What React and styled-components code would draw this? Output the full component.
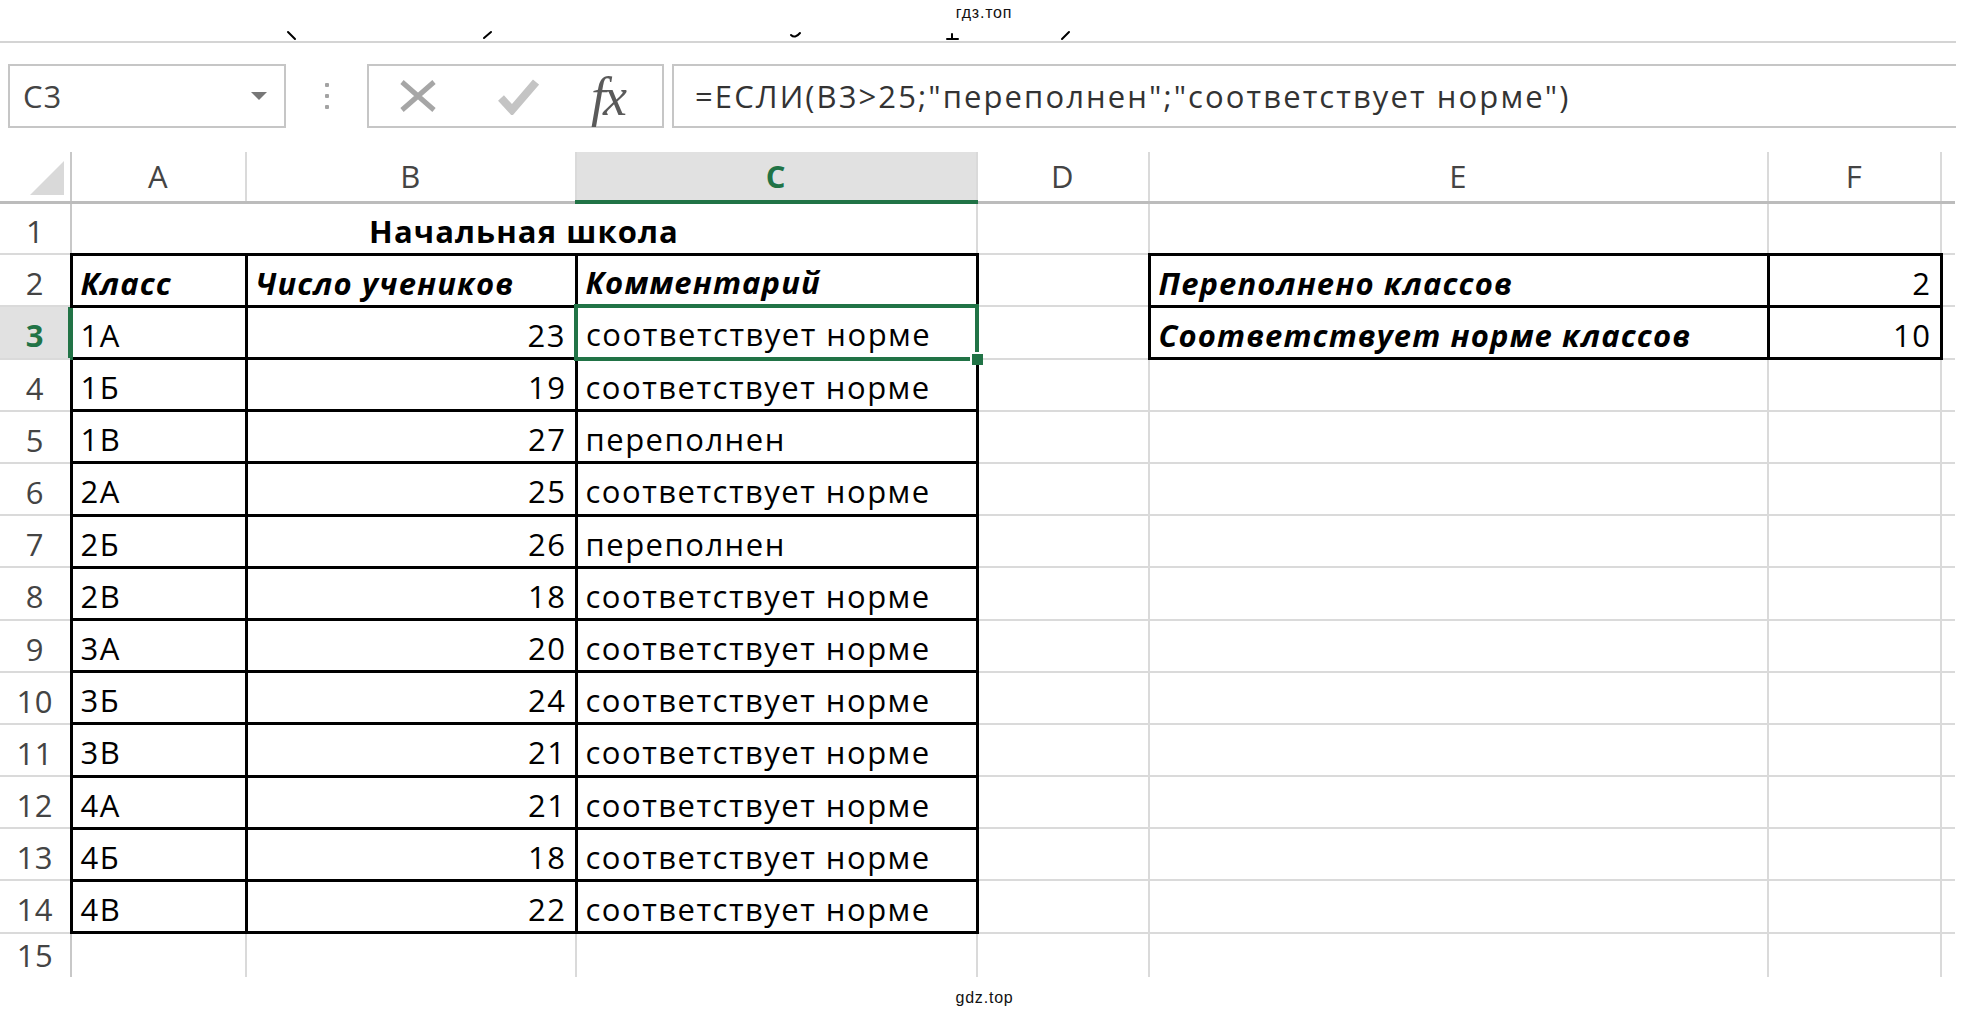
import React from 'react'
import styled, { createGlobalStyle, css } from 'styled-components'

const GREEN = '#217346'
const GRID = '#dadada'

const COLS = [71, 175, 330, 401, 172, 619, 173, 14]

const DATA = [
  ['1А', 23, 'соответствует норме'],
  ['1Б', 19, 'соответствует норме'],
  ['1В', 27, 'переполнен'],
  ['2А', 25, 'соответствует норме'],
  ['2Б', 26, 'переполнен'],
  ['2В', 18, 'соответствует норме'],
  ['3А', 20, 'соответствует норме'],
  ['3Б', 24, 'соответствует норме'],
  ['3В', 21, 'соответствует норме'],
  ['4А', 21, 'соответствует норме'],
  ['4Б', 18, 'соответствует норме'],
  ['4В', 22, 'соответствует норме'],
]

const SUMMARY = {
  2: ['Переполнено классов', 2],
  3: ['Соответствует норме классов', 10],
}

const GlobalStyle = createGlobalStyle`
  html, body {
    margin: 0;
    padding: 0;
    background: #fff;
  }
  body {
    font-family: "Open Sans", "Liberation Sans", sans-serif;
  }
`

const Page = styled.div`
  width: 1969px;
  height: 1012px;
  overflow: hidden;
  background: #fff;
  display: flex;
  flex-direction: column;
`

const TopStrip = styled.div`
  position: relative;
  width: 1956px;
  height: 43px;
  box-sizing: border-box;
  border-bottom: 2px solid #d4d4d4;
  padding: 4px 0 0 12px;
  text-align: center;
`

const Watermark = styled.div`
  font-family: "Liberation Sans", Arial, sans-serif;
  font-size: 16px;
  letter-spacing: 0.8px;
  line-height: 17px;
  color: #111;
  text-align: center;
`

const Marks = styled.svg`
  position: absolute;
  left: 0;
  top: 0;
`

const FormulaBar = styled.div`
  display: flex;
  align-items: flex-start;
  width: 1956px;
  box-sizing: border-box;
  padding: 21px 0 24px 8px;
`

const NameBox = styled.div`
  width: 278px;
  height: 64px;
  box-sizing: border-box;
  border: 2px solid #c6c6c6;
  display: flex;
  align-items: center;
  justify-content: space-between;
  padding: 0 17px 0 13px;
  font-size: 31px;
  letter-spacing: 1px;
  color: #444;
`

const DropArrow = styled.span`
  width: 0;
  height: 0;
  border-left: 8px solid transparent;
  border-right: 8px solid transparent;
  border-top: 8px solid #777;
`

const Dots = styled.div`
  width: 81px;
  height: 64px;
  display: flex;
  flex-direction: column;
  align-items: center;
  justify-content: center;
  gap: 7px;
`

const Dot = styled.span`
  width: 4px;
  height: 4px;
  border-radius: 1px;
  background: #a3a3a3;
`

const ButtonsBox = styled.div`
  width: 297px;
  height: 64px;
  box-sizing: border-box;
  border: 2px solid #c6c6c6;
  display: flex;
  align-items: center;
  padding-left: 30px;
`

const Icon = styled.svg`
  flex: none;
  margin-left: ${p => p.$gap || 0}px;
`

const Fx = styled.span`
  margin-left: 52px;
  margin-top: 2px;
  font-family: "Liberation Serif", "Times New Roman", serif;
  font-style: italic;
  font-size: 54px;
  line-height: 54px;
  letter-spacing: -3px;
  color: #5a5a5a;
`

const FormulaBox = styled.div`
  flex: 1;
  height: 64px;
  box-sizing: border-box;
  border: 2px solid #c6c6c6;
  border-right: none;
  margin-left: 8px;
  display: flex;
  align-items: center;
  padding-left: 21px;
  font-size: 31px;
  letter-spacing: 2.1px;
  color: #333;
`

const Sheet = styled.table`
  border-collapse: collapse;
  table-layout: fixed;
  width: ${COLS.reduce((a, b) => a + b, 0)}px;
  font-size: 31px;
  letter-spacing: 1.5px;
  line-height: 1.36;
`

const Col = styled.col`
  width: ${p => p.$w}px;
`

const Row = styled.tr`
  height: ${p => p.$h}px;
`

const Corner = styled.th`
  padding: 0;
  border-right: 2px solid #c8c8c8;
  border-bottom: 3px solid #bcbcbc;
  vertical-align: bottom;
  text-align: right;
`

const CornerMark = styled.svg`
  display: block;
  margin: 0 6px 6px auto;
`

const ColHead = styled.th`
  padding: 0 0 3px;
  font-weight: 400;
  color: #444;
  text-align: center;
  vertical-align: bottom;
  border-right: ${p => (p.$open ? 'none' : `2px solid ${GRID}`)};
  border-bottom: 3px solid #bcbcbc;
  ${p =>
    p.$active &&
    css`
      background: #e1e1e1;
      color: ${GREEN};
      font-weight: 700;
      border-bottom: 4px solid ${GREEN};
    `}
`

const RowHead = styled.th`
  padding: 0 0 1px;
  font-weight: 400;
  color: #444;
  text-align: center;
  vertical-align: bottom;
  letter-spacing: 0.5px;
  border-right: 2px solid #c8c8c8;
  border-bottom: ${p => (p.$last ? 'none' : `2px solid ${GRID}`)};
  ${p =>
    p.$active &&
    css`
      background: #e1e1e1;
      color: ${GREEN};
      font-weight: 700;
      border-right: 3px solid ${GREEN};
      box-shadow: inset -2px 0 0 ${GREEN};
    `}
`

const Cell = styled.td`
  position: relative;
  padding: 0 8px 1px 8px;
  vertical-align: bottom;
  white-space: nowrap;
  color: #000;
  text-align: ${p => p.$align || 'left'};
  font-weight: ${p => (p.$bold ? 700 : 400)};
  font-style: ${p => (p.$italic ? 'italic' : 'normal')};
  letter-spacing: ${p => (p.$bold ? 1.1 : 1.5)}px;
  border-right: ${p => (p.$open ? 'none' : `2px solid ${GRID}`)};
  border-bottom: ${p => (p.$last ? 'none' : `2px solid ${GRID}`)};
  ${p =>
    p.$boxed &&
    css`
      border: 3px solid #000;
    `}
  ${p =>
    p.$selected &&
    css`
      border: 4px solid ${GREEN};
    `}
`

const FillHandle = styled.span`
  position: absolute;
  z-index: 2;
  right: -8px;
  bottom: -8px;
  width: 13px;
  height: 13px;
  box-sizing: border-box;
  background: ${GREEN};
  border-left: 2px solid #fff;
  border-top: 2px solid #fff;
`

const Footer = styled.div`
  padding-top: 12px;
  font-family: "Liberation Sans", Arial, sans-serif;
  font-size: 16px;
  letter-spacing: 0.8px;
  line-height: 17px;
  color: #111;
  text-align: center;
`

function TopMarks() {
  return (
    <Marks width="1956" height="41" viewBox="0 0 1956 41">
      <g stroke="#000" strokeWidth="2" fill="none" strokeLinecap="round">
        <path d="M288 32 L295 39" />
        <path d="M484 38 L491 32" />
        <path d="M791 35 Q795 39 800 33" />
        <path d="M952 34 L952 38 M947 39 L958 39" />
        <path d="M1062 39 L1069 32" />
      </g>
    </Marks>
  )
}

function FormulaRow() {
  return (
    <FormulaBar>
      <NameBox>
        <span>C3</span>
        <DropArrow />
      </NameBox>
      <Dots>
        <Dot />
        <Dot />
        <Dot />
      </Dots>
      <ButtonsBox>
        <Icon width="38" height="34" viewBox="0 0 38 34">
          <path d="M3 3 L35 31 M35 3 L3 31" stroke="#a6a6a6" strokeWidth="5" />
        </Icon>
        <Icon $gap={60} width="42" height="37" viewBox="0 0 42 37">
          <path d="M4 20 L15 32 L39 4" stroke="#c4c4c4" strokeWidth="8" fill="none" />
        </Icon>
        <Fx>fx</Fx>
      </ButtonsBox>
      <FormulaBox>=ЕСЛИ(B3&gt;25;"переполнен";"соответствует норме")</FormulaBox>
    </FormulaBar>
  )
}

function DataRow({ n, item }) {
  const [cls, count, note] = item
  const summary = SUMMARY[n]
  const selected = n === 3
  return (
    <Row $h={52.2}>
      <RowHead $active={selected}>{n}</RowHead>
      <Cell $boxed>{cls}</Cell>
      <Cell $boxed $align="right">
        {count}
      </Cell>
      <Cell $boxed $selected={selected}>
        {note}
        {selected && <FillHandle />}
      </Cell>
      <Cell />
      {summary ? (
        <>
          <Cell $boxed $bold $italic>
            {summary[0]}
          </Cell>
          <Cell $boxed $align="right">
            {summary[1]}
          </Cell>
        </>
      ) : (
        <>
          <Cell />
          <Cell />
        </>
      )}
      <Cell $open />
    </Row>
  )
}

export default function App() {
  return (
    <Page>
      <GlobalStyle />
      <TopStrip>
        <TopMarks />
        <Watermark>гдз.топ</Watermark>
      </TopStrip>
      <FormulaRow />
      <Sheet>
        <colgroup>
          {COLS.map((w, i) => (
            <Col key={i} $w={w} />
          ))}
        </colgroup>
        <thead>
          <Row $h={50}>
            <Corner>
              <CornerMark width="34" height="34" viewBox="0 0 34 34">
                <polygon points="34,0 34,34 0,34" fill="#d9d9d9" />
              </CornerMark>
            </Corner>
            <ColHead>A</ColHead>
            <ColHead>B</ColHead>
            <ColHead $active>C</ColHead>
            <ColHead>D</ColHead>
            <ColHead>E</ColHead>
            <ColHead>F</ColHead>
            <ColHead $open />
          </Row>
        </thead>
        <tbody>
          <Row $h={52.2}>
            <RowHead>1</RowHead>
            <Cell colSpan={3} $align="center" $bold>
              Начальная школа
            </Cell>
            <Cell />
            <Cell />
            <Cell />
            <Cell $open />
          </Row>
          <Row $h={52.2}>
            <RowHead>2</RowHead>
            <Cell $boxed $bold $italic>
              Класс
            </Cell>
            <Cell $boxed $bold $italic>
              Число учеников
            </Cell>
            <Cell $boxed $bold $italic>
              Комментарий
            </Cell>
            <Cell />
            <Cell $boxed $bold $italic>
              {SUMMARY[2][0]}
            </Cell>
            <Cell $boxed $align="right">
              {SUMMARY[2][1]}
            </Cell>
            <Cell $open />
          </Row>
          {DATA.map((item, i) => (
            <DataRow key={i} n={i + 3} item={item} />
          ))}
          <Row $h={40}>
            <RowHead $last>15</RowHead>
            <Cell $last />
            <Cell $last />
            <Cell $last />
            <Cell $last />
            <Cell $last />
            <Cell $last />
            <Cell $last $open />
          </Row>
        </tbody>
      </Sheet>
      <Footer>gdz.top</Footer>
    </Page>
  )
}
